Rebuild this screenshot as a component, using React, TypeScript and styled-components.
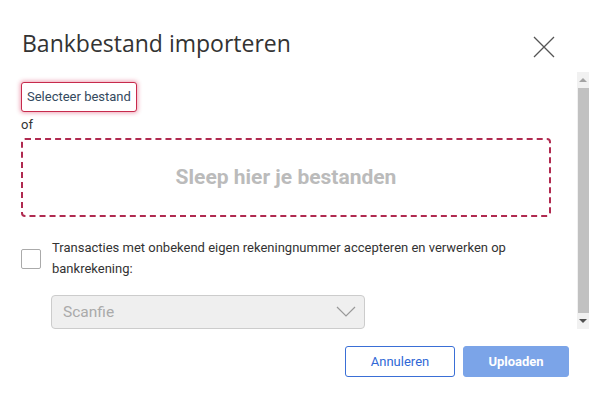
import React from "react";
import styled, { createGlobalStyle } from "styled-components";

const Global = createGlobalStyle`
  html, body { margin: 0; padding: 0; background: #fff; }
  body { font-family: Roboto, "Liberation Sans", Arial, sans-serif; }
  * { box-sizing: border-box; }
`;

const Dialog = styled.div`
  width: 589px;
  height: 398px;
  display: flex;
  flex-direction: column;
  background: #fff;
  overflow: hidden;
`;

const Header = styled.div`
  display: flex;
  justify-content: space-between;
  align-items: flex-start;
  padding: 28px 34px 0 22px;
  height: 72px;
`;

const Title = styled.h1`
  margin: 0;
  font-family: "Open Sans", sans-serif;
  font-weight: 400;
  font-size: 23px;
  line-height: 30px;
  color: #333;
`;

const CloseButton = styled.button`
  border: 0;
  background: none;
  padding: 0;
  margin-top: 8px;
  width: 22px;
  height: 22px;
  display: flex;
  cursor: pointer;
`;

const Body = styled.div`
  display: flex;
  height: 257px;
`;

const Content = styled.div`
  flex: 1;
  padding: 10px 26px 0 21px;
  display: flex;
  flex-direction: column;
  overflow: hidden;
`;

const SelectFile = styled.button`
  align-self: flex-start;
  height: 30px;
  padding: 0 5px;
  border: 1px solid #c72a4c;
  border-radius: 3px;
  background: #fff;
  box-shadow: 0 0 4px 1px rgba(214, 50, 90, 0.45);
  font-family: Roboto, sans-serif;
  font-size: 13px;
  color: #34495e;
`;

const Or = styled.div`
  font-size: 13px;
  line-height: 18px;
  color: #333;
  margin-top: 4px;
`;

const DropZone = styled.div`
  margin-top: 4px;
  height: 80px;
  border: 2px dashed #b02a50;
  border-radius: 4px;
  display: flex;
  align-items: center;
  justify-content: center;
  font-family: Roboto, sans-serif;
  font-weight: 700;
  font-size: 21px;
  color: #bbbbbb;
`;

const CheckRow = styled.label`
  display: flex;
  align-items: center;
  margin-top: 20px;
  gap: 11px;
`;

const Box = styled.span`
  flex: none;
  width: 20px;
  height: 20px;
  border: 1px solid #aaa;
  border-radius: 2px;
  background: #fff;
  margin-top: 2px;
`;

const CheckText = styled.span`
  font-size: 13px;
  line-height: 21px;
  color: #333;
  max-width: 480px;
`;

const SelectBox = styled.div`
  margin: 16px 0 0 30px;
  width: 314px;
  height: 34px;
  flex: none;
  border: 1px solid #ccc;
  border-radius: 4px;
  background: #efefef;
  display: flex;
  align-items: center;
  justify-content: space-between;
  padding: 0 8px 0 11px;
  font-size: 15.5px;
  color: #aaa;
`;

const Scrollbar = styled.div`
  width: 12px;
  background: #f1f1f1;
  display: flex;
  flex-direction: column;
  align-items: center;
`;

const Arrow = styled.div<{ $up?: boolean }>`
  height: 16px;
  display: flex;
  align-items: center;
  justify-content: center;
  &::before {
    content: "";
    border-left: 4px solid transparent;
    border-right: 4px solid transparent;
    ${(p) => (p.$up ? "border-bottom: 4px solid #a3a3a3;" : "border-top: 4px solid #505050;")}
  }
`;

const Thumb = styled.div`
  flex: 1;
  width: 100%;
  background: #c1c1c1;
  margin-left: 2px;
`;

const Footer = styled.div`
  display: flex;
  justify-content: flex-end;
  gap: 8px;
  padding: 17px 20px 0 0;
`;

const Btn = styled.button<{ $primary?: boolean }>`
  height: 31px;
  width: ${(p) => (p.$primary ? "106px" : "110px")};
  border-radius: 3px;
  font-family: Roboto, sans-serif;
  font-size: 13px;
  border: 1px solid ${(p) => (p.$primary ? "#7ba4e8" : "#3a6fd6")};
  background: ${(p) => (p.$primary ? "#7ba4e8" : "#fff")};
  color: ${(p) => (p.$primary ? "#fff" : "#2f68d6")};
  font-weight: ${(p) => (p.$primary ? 700 : 400)};
`;

export default function App() {
  return (
    <>
      <Global />
      <Dialog>
        <Header>
          <Title>Bankbestand importeren</Title>
          <CloseButton aria-label="Sluiten">
            <svg width="22" height="22" viewBox="0 0 22 22">
              <path d="M1 1 L21 21 M21 1 L1 21" stroke="#555" strokeWidth="1.3" fill="none" />
            </svg>
          </CloseButton>
        </Header>
        <Body>
          <Content>
            <SelectFile>Selecteer bestand</SelectFile>
            <Or>of</Or>
            <DropZone>Sleep hier je bestanden</DropZone>
            <CheckRow>
              <Box />
              <CheckText>
                Transacties met onbekend eigen rekeningnummer accepteren en verwerken op bankrekening:
              </CheckText>
            </CheckRow>
            <SelectBox>
              <span>Scanfie</span>
              <svg width="20" height="12" viewBox="0 0 20 12">
                <path d="M1 1 L10 10 L19 1" stroke="#999" strokeWidth="1.2" fill="none" />
              </svg>
            </SelectBox>
          </Content>
          <Scrollbar>
            <Arrow $up />
            <Thumb />
            <Arrow />
          </Scrollbar>
        </Body>
        <Footer>
          <Btn>Annuleren</Btn>
          <Btn $primary>Uploaden</Btn>
        </Footer>
      </Dialog>
    </>
  );
}
